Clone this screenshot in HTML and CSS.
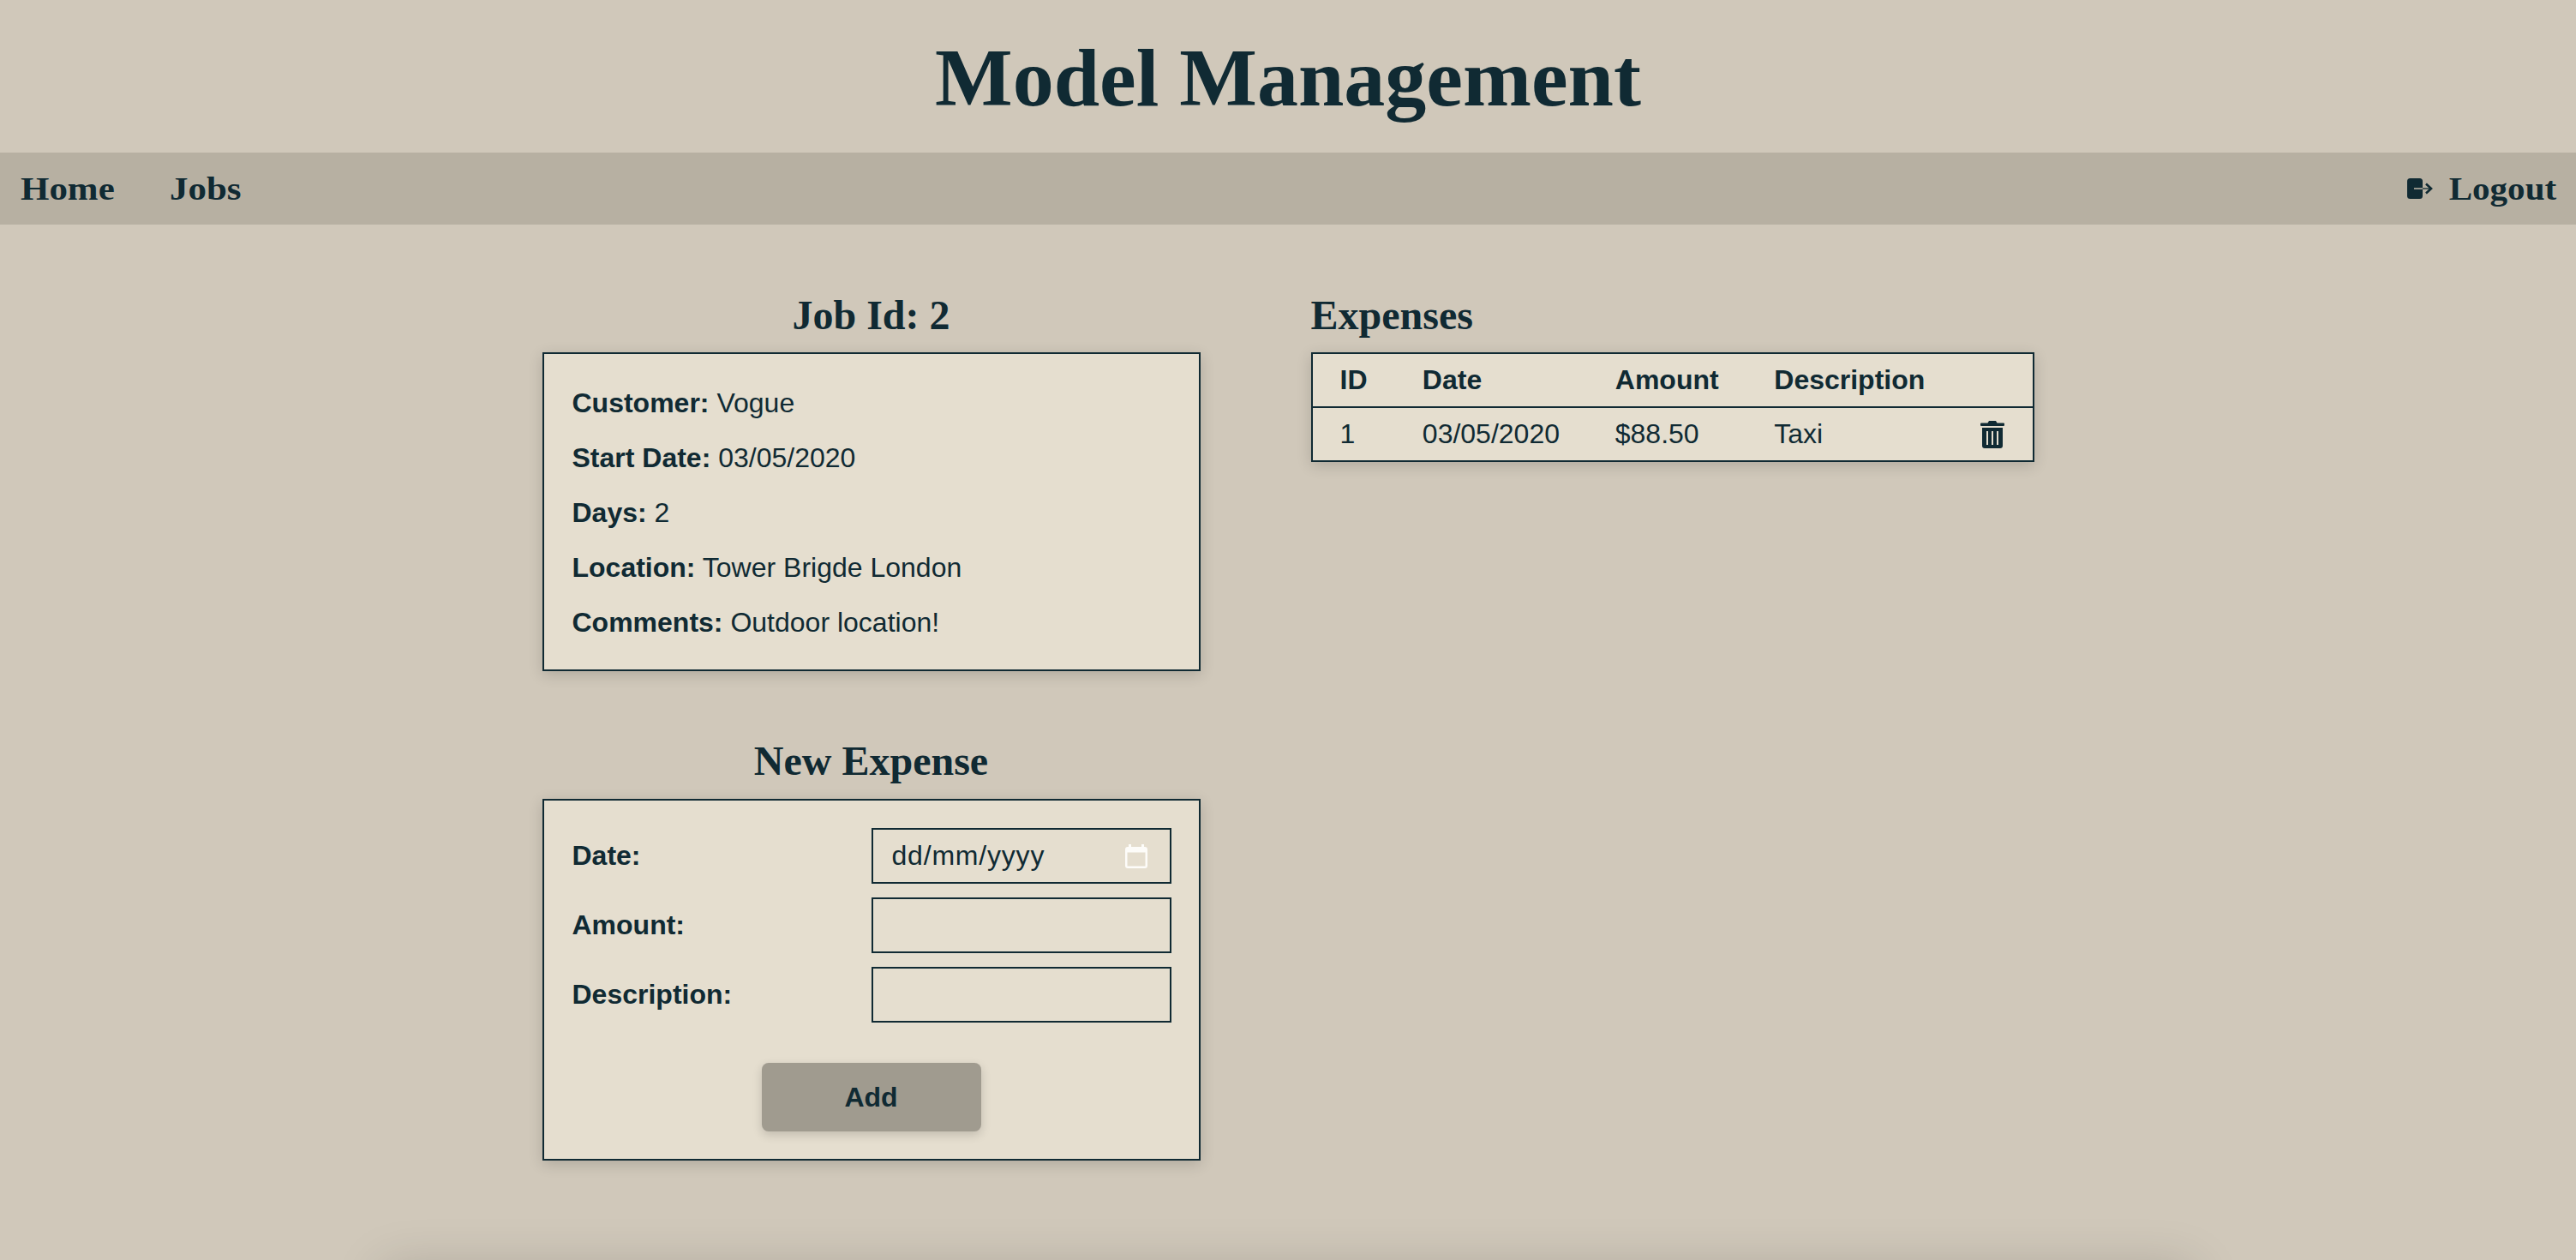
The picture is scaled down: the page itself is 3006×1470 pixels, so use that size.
FILE: index.html
```html
<!DOCTYPE html>
<html lang="en">
<head>
<meta charset="utf-8">
<title>Model Management</title>
<link rel="stylesheet" href="styles.css">
</head>
<body>
<header class="masthead"><h1 class="title">Model Management</h1></header>
<nav class="nav">
  <div class="nav-links">
    <a class="nav-link" href="#"><span class="nav-text">Home</span></a>
    <a class="nav-link" href="#"><span class="nav-text">Jobs</span></a>
  </div>
  <a class="nav-link logout" href="#">
    <svg class="logout-icon" viewBox="0 0 30 24" aria-hidden="true">
      <rect x="0" y="0" width="18" height="24" rx="3.5" class="fill-dark"/>
      <path d="M8 12H18" class="line-light"/>
      <path d="M18 12H28" class="line-dark-thin"/>
      <path d="M22 6.5L28 12L22 17.5" class="line-dark"/>
    </svg>
    <span class="nav-text logout-text">Logout</span>
  </a>
</nav>
<main class="main">
  <section class="col-left">
    <h2 class="heading center">Job Id: 2</h2>
    <div class="card details">
      <p class="row"><b>Customer:</b> Vogue</p>
      <p class="row"><b>Start Date:</b> 03/05/2020</p>
      <p class="row"><b>Days:</b> 2</p>
      <p class="row"><b>Location:</b> Tower Brigde London</p>
      <p class="row"><b>Comments:</b> Outdoor location!</p>
    </div>
    <h2 class="heading center second">New Expense</h2>
    <form class="card form">
      <div class="form-row">
        <label class="form-label">Date:</label>
        <div class="input date-input">
          <span class="date-text">dd/mm/yyyy</span>
          <svg class="cal-icon" viewBox="0 0 26 28" aria-hidden="true">
            <path d="M4 0h3v3H4zM19 0h3v3h-3z" class="fill-white"/>
            <path d="M3 3h20a3 3 0 0 1 3 3v19a3 3 0 0 1-3 3H3a3 3 0 0 1-3-3V6a3 3 0 0 1 3-3zM2.500 9.500V25.500H23.500V9.500z" class="fill-white" fill-rule="evenodd"/>
          </svg>
        </div>
      </div>
      <div class="form-row">
        <label class="form-label" for="amount">Amount:</label>
        <input class="input" id="amount" type="text">
      </div>
      <div class="form-row">
        <label class="form-label" for="description">Description:</label>
        <input class="input" id="description" type="text">
      </div>
      <div class="actions"><button class="btn" type="button">Add</button></div>
    </form>
  </section>
  <section class="col-right">
    <h2 class="heading">Expenses</h2>
    <table class="table">
      <thead>
        <tr><th>ID</th><th>Date</th><th>Amount</th><th>Description</th><th></th></tr>
      </thead>
      <tbody>
        <tr>
          <td>1</td><td>03/05/2020</td><td>$88.50</td><td>Taxi</td>
          <td class="icon-cell">
            <svg class="trash-icon" viewBox="0 0 28 32" aria-hidden="true">
              <path class="fill-dark" fill-rule="evenodd" d="M10 0h8l1.500 2.500H27a1 1 0 0 1 1 1V5a1 1 0 0 1-1 1H1a1 1 0 0 1-1-1V3.500a1 1 0 0 1 1-1h7.500zM2 8h24v21a3 3 0 0 1-3 3H5a3 3 0 0 1-3-3zM7 12v16h2V12zM13 12v16h2V12zM19 12v16h2V12z"/>
            </svg>
          </td>
        </tr>
      </tbody>
    </table>
  </section>
</main>
<footer class="footer"></footer>
</body>
</html>
```

FILE: styles.css
```css
* { box-sizing: border-box; }
html, body { margin: 0; height: 100%; overflow: hidden; }
body {
  background: #d0c8ba;
  color: #102a33;
  font-family: "Liberation Sans", Arial, sans-serif;
  font-size: 32px;
  line-height: 37px;
}
.masthead { height: 178px; display: flex; align-items: center; justify-content: center; padding-top: 3px; }
.title { margin: 0; font: bold 96px/110px "Liberation Serif", "Times New Roman", serif; }
.nav {
  height: 84px;
  background: #b7b0a2;
  display: flex;
  align-items: center;
  justify-content: space-between;
  padding: 0 23px 0 24px;
}
.nav-links { display: flex; gap: 77px; }
.nav-link {
  color: inherit;
  text-decoration: none;
  font: bold 38px/44px "Liberation Serif", "Times New Roman", serif;
}
.nav-text { display: inline-block; transform: scaleX(1.13); transform-origin: left center; }
.logout-text { transform: scaleX(1.08); transform-origin: right center; }
.logout { display: flex; align-items: center; gap: 28px; }
.logout-icon { width: 30px; height: 24px; display: block; }
.fill-dark { fill: #102a33; }
.fill-white { fill: #fdfcf9; }
.line-light { stroke: #b7b0a2; stroke-width: 1.600; fill: none; }
.line-dark-thin { stroke: #2f4548; stroke-width: 1.600; fill: none; }
.line-dark { stroke: #102a33; stroke-width: 2.600; fill: none; }
.main { display: flex; justify-content: center; gap: 129px; padding-top: 78px; height: 1218px; }
.col-left { width: 768px; }
.col-right { width: 844px; }
.heading { margin: 0 0 16px; font: bold 48px/55px "Liberation Serif", "Times New Roman", serif; }
.center { text-align: center; }
.second { margin-top: 77px; margin-bottom: 17px; }
.card {
  background: #e5decf;
  border: 2px solid #102a33;
  box-shadow: 0 4px 16px rgba(0, 0, 0, .16);
}
.details { padding: 39px 32px 36px 33px; display: flex; flex-direction: column; gap: 27px; }
.row { margin: 0; }
.form { padding: 32px; display: flex; flex-direction: column; gap: 16px; }
.form-row { display: flex; justify-content: space-between; align-items: center; }
.form-label { font-weight: bold; padding-left: 1px; }
.input {
  width: 350px;
  height: 65px;
  border: 2px solid #102a33;
  background: transparent;
  padding: 0 22px;
  color: inherit;
  font: inherit;
  border-radius: 0;
}
.date-input { display: flex; align-items: center; justify-content: space-between; padding-right: 26px; }
.date-text { letter-spacing: .8px; }
.cal-icon { width: 26px; height: 28px; display: block; }
.actions { display: flex; justify-content: center; margin-top: 31px; }
.btn {
  width: 256px;
  height: 80px;
  border: 0;
  border-radius: 8px;
  background: #a09b8f;
  color: inherit;
  font: bold 32px/37px "Liberation Sans", Arial, sans-serif;
  box-shadow: 0 4px 12px rgba(0, 0, 0, .16);
}
.table {
  border-collapse: collapse;
  border: 2px solid #102a33;
  background: #e5decf;
  width: 844px;
  box-shadow: 0 4px 16px rgba(0, 0, 0, .16);
}
.table th, .table td { text-align: left; padding: 12px 32px; font-size: 32px; }
.table thead tr { border-bottom: 2px solid #102a33; }
.icon-cell { line-height: 0; vertical-align: middle; }
.trash-icon { width: 28px; height: 32px; display: block; }
.footer {
  width: 2110px;
  height: 100px;
  margin: 0 auto;
  box-shadow: 0 0 60px rgba(0, 0, 0, .18);
}
```
